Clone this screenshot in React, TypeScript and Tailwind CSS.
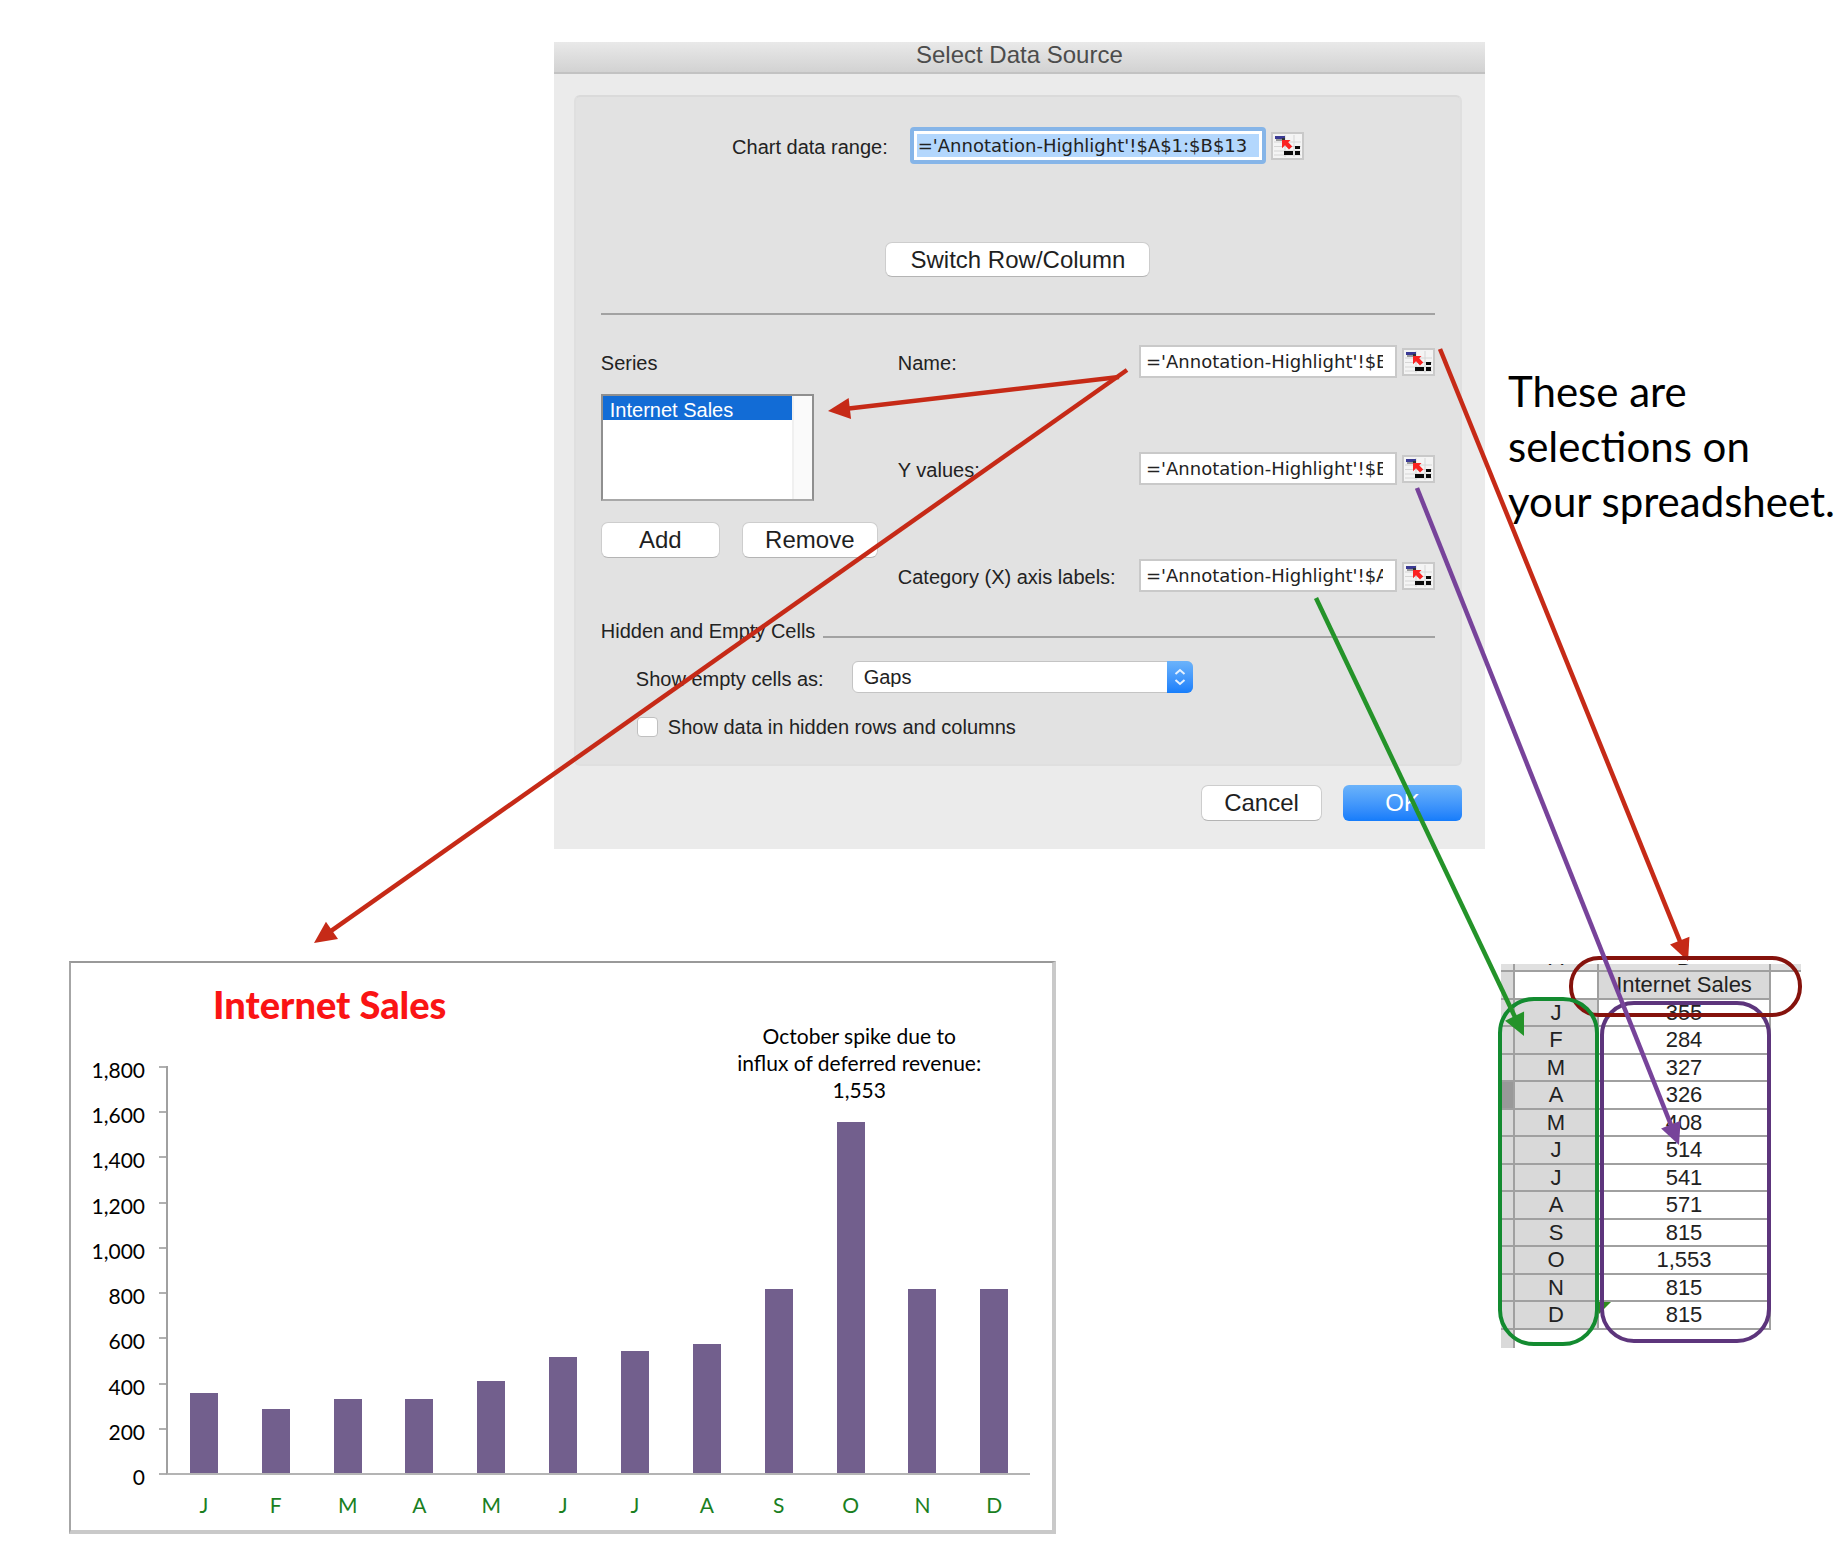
import React from "react";

const sales = [
  { month: "J", value: 355 },
  { month: "F", value: 284 },
  { month: "M", value: 327 },
  { month: "A", value: 326 },
  { month: "M", value: 408 },
  { month: "J", value: 514 },
  { month: "J", value: 541 },
  { month: "A", value: 571 },
  { month: "S", value: 815 },
  { month: "O", value: 1553 },
  { month: "N", value: 815 },
  { month: "D", value: 815 },
];

const AXIS_MAX = 1800;
const axisSteps = [1800, 1600, 1400, 1200, 1000, 800, 600, 400, 200, 0];

function RangePicker({ label }: { label: string }) {
  return (
    <button
      type="button"
      aria-label={label}
      className="h-[28px] w-[33px] shrink-0 border-2 border-[#c9c9c9] bg-[#f4f4f4]"
    >
      <svg viewBox="0 0 29 24" className="block h-[24px] w-[29px]" aria-hidden="true">
        <path d="M1 8h27M1 12.500h27M1 17h27M1 21h27M12 1v22M21 1v22" stroke="#d6d6d6" strokeWidth="1" />
        <rect x="2" y="2" width="10" height="3" fill="#3a3a94" />
        <rect x="3" y="5" width="9" height="2" fill="#9a9a9a" />
        <rect x="9" y="4" width="3" height="3" fill="#333" />
        <rect x="11" y="17" width="9" height="4" fill="#0a0a0a" />
        <rect x="22" y="17" width="5" height="4" fill="#0a0a0a" />
        <rect x="22" y="12" width="5" height="3" fill="#0a0a0a" />
        <path d="M9 6h8.500l-2.300 2.300 4 4.200-3.200 3-4-4.300-3 3z" fill="#fb2222" />
      </svg>
    </button>
  );
}

function RangeField({ id, label, value }: { id: string; label: string; value: string }) {
  return (
    <div className="flex h-[33px] items-center">
      <label htmlFor={id} className="flex-1 whitespace-nowrap pt-[3px]">
        {label}
      </label>
      <input
        id={id}
        type="text"
        defaultValue={value}
        className="h-[33px] w-[258px] border-2 border-[#c9c9c9] bg-white pl-[5px] pr-[12px] font-['DejaVu_Sans',sans-serif] text-[18px] outline-none"
      />
      <span className="ml-[5px] flex">
        <RangePicker label={`Pick range for ${label}`} />
      </span>
    </div>
  );
}

const pushButton =
  "rounded-[7px] border border-[#cdcdcd] border-b-[#b4b4b4] bg-white text-[24px] leading-none text-[#1f1f1f]";

function DataSourceDialog() {
  return (
    <form
      aria-labelledby="dialog-title"
      onSubmit={(e) => e.preventDefault()}
      className="min-w-0 flex-1 bg-[#ebebeb] pb-[28px] font-['Liberation_Sans',Arial,sans-serif] text-[20px] leading-[24px] text-[#222]"
    >
      <h1
        id="dialog-title"
        className="h-[32px] border-b-2 border-[#c2c2c2] bg-linear-to-b from-[#e9e9e9] to-[#d2d2d2] text-center text-[24px] leading-[26px] text-[#4c4c4c]"
      >
        Select Data Source
      </h1>

      <div className="mt-[21px] ml-[20px] mr-[23px] rounded-[6px] border-2 border-[#dfdfdf] border-t-[#dadada] bg-[#e2e2e2] px-[25px] pt-[30px] pb-[25px]">
        <div className="flex items-center justify-center">
          <label htmlFor="chart-range" className="pt-[3px]">
            Chart data range:
          </label>
          <span className="ml-[22px] rounded-[4px] border-4 border-[#86b5e8] bg-white p-[3px]">
            <input
              id="chart-range"
              type="text"
              defaultValue="='Annotation-Highlight'!$A$1:$B$13"
              className="block h-[23px] w-[342px] bg-[#b3d7fd] pl-px font-['DejaVu_Sans',sans-serif] text-[18px] outline-none"
            />
          </span>
          <span className="ml-[5px] flex">
            <RangePicker label="Pick chart data range" />
          </span>
        </div>

        <div className="mt-[78px] flex justify-center">
          <button type="button" className={`${pushButton} h-[35px] w-[265px]`}>
            Switch Row/Column
          </button>
        </div>

        <hr className="mt-[36px] border-t-2 border-[#a2a2a2]" />

        <div className="mt-[30px] flex">
          <div className="w-[297px] shrink-0">
            <h2 id="series-label" className="pt-[6px]">
              Series
            </h2>
            <div className="mt-[19px] flex h-[107px] w-[213px] border-2 border-[#8f8f8f] border-b-[#a8a8a8] bg-white">
              <ul role="listbox" aria-labelledby="series-label" className="flex-1">
                <li
                  role="option"
                  aria-selected="true"
                  className="h-[24px] bg-[#126cd6] pl-[7px] leading-[28px] text-white"
                >
                  Internet Sales
                </li>
              </ul>
              <div className="w-[20px] border-l-2 border-[#f0f0f0] bg-[#fafafa]" />
            </div>
            <div className="mt-[21px] flex gap-[22px]">
              <button type="button" className={`${pushButton} h-[36px] w-[119px]`}>
                Add
              </button>
              <button type="button" className={`${pushButton} h-[36px] w-[136px]`}>
                Remove
              </button>
            </div>
          </div>
          <div className="flex flex-1 flex-col gap-[74px]">
            <RangeField id="series-name" label="Name:" value="='Annotation-Highlight'!$B$1" />
            <RangeField id="series-values" label="Y values:" value="='Annotation-Highlight'!$B$2:$B$13" />
            <RangeField id="series-axis" label="Category (X) axis labels:" value="='Annotation-Highlight'!$A$2:$A$13" />
          </div>
        </div>

        <div className="mt-[27px] flex items-center gap-[8px]">
          <h2>Hidden and Empty Cells</h2>
          <div className="mt-[12px] h-[2px] flex-1 bg-[#a2a2a2]" />
        </div>

        <div className="mt-[18px] flex items-center pl-[35px]">
          <label htmlFor="empty-cells" className="pt-[3px]">
            Show empty cells as:
          </label>
          <div className="relative ml-[28px] w-[341px]">
            <select
              id="empty-cells"
              defaultValue="Gaps"
              className="block h-[32px] w-full appearance-none rounded-[6px] border border-[#c4c4c4] bg-white pl-[11px] leading-none outline-none"
            >
              <option>Gaps</option>
              <option>Zero</option>
            </select>
            <span className="pointer-events-none absolute inset-y-0 right-0 flex w-[26px] items-center justify-center rounded-r-[6px] bg-linear-to-b from-[#6bb3fa] to-[#167efb]">
              <svg viewBox="0 0 12 18" className="h-[18px] w-[12px]" aria-hidden="true">
                <path d="M1.500 6 6 2l4.500 4M1.500 12 6 16l4.500-4" fill="none" stroke="#e4f1ff" strokeWidth="2" />
              </svg>
            </span>
          </div>
        </div>

        <label className="mt-[22px] flex items-center gap-[10px] pl-[36px]">
          <input
            type="checkbox"
            className="h-[20px] w-[21px] appearance-none rounded-[4px] border border-[#c0c0c0] bg-white"
          />
          Show data in hidden rows and columns
        </label>
      </div>

      <div className="mt-[19px] flex justify-end gap-[21px] pr-[23px]">
        <button type="button" className={`${pushButton} h-[36px] w-[121px]`}>
          Cancel
        </button>
        <button
          type="submit"
          className="h-[36px] w-[119px] rounded-[6px] bg-linear-to-b from-[#6bb3fa] to-[#147cfb] text-[24px] leading-none text-white"
        >
          OK
        </button>
      </div>
    </form>
  );
}

function SalesChart() {
  return (
    <figure className="relative w-[57%] self-start border-t-2 border-r-4 border-b-4 border-l-2 border-t-[#999] border-r-[#c9c9c9] border-b-[#c9c9c9] border-l-[#a6a6a6] bg-white pr-[22px] pb-[13px] font-['Lato',sans-serif] text-[21px] leading-[24px] text-black">
      <figcaption className="ml-[142px] pt-[19px] text-[38px] leading-[44px] font-black text-[#fa1414]">
        Internet Sales
      </figcaption>
      <p className="absolute top-[59px] right-[48px] w-[290px] text-center leading-[27px]">
        October spike due to
        <br />
        influx of deferred revenue:
        <br />
        1,553
      </p>
      <div className="mt-[40px] flex h-[409px]">
        <ul className="-mt-[8px] -mb-[14px] flex w-[74px] flex-col justify-between text-right">
          {axisSteps.map((step) => (
            <li key={step}>{step.toLocaleString("en-US")}</li>
          ))}
        </ul>
        <div className="ml-[14px] flex w-[7px] flex-col justify-between">
          {axisSteps.map((step) => (
            <span key={step} className="h-[2px] bg-[#b0b0b0]" />
          ))}
        </div>
        <div className="grid flex-1 grid-cols-12 items-end justify-items-center border-b-2 border-l-2 border-b-[#b4b4b4] border-l-[#a0a0a0]">
          {sales.map((item, i) => (
            <div
              key={i}
              className="w-[28px] bg-[#725f8d]"
              style={{ height: `${(item.value / AXIS_MAX) * 100}%` }}
            />
          ))}
        </div>
      </div>
      <ol className="mt-[18px] ml-[97px] grid grid-cols-12 text-center text-[#1a7f1f]">
        {sales.map((item, i) => (
          <li key={i}>{item.month}</li>
        ))}
      </ol>
    </figure>
  );
}

const gutter = "border-r-2 border-b-2 border-[#a0a0a0] p-0";

function Worksheet() {
  return (
    <table className="mt-[3px] w-[300px] table-fixed border-separate border-spacing-0 self-start text-center font-['Liberation_Sans',Arial,sans-serif] text-[22px] leading-[24px] text-[#222]">
      <colgroup>
        <col className="w-[14px]" />
        <col className="w-[84px]" />
        <col className="w-[172px]" />
        <col className="w-[30px]" />
      </colgroup>
      <thead>
        <tr className="bg-[#e0e0e0] font-normal">
          <td className={`${gutter} h-[8px]`} />
          <th scope="col" className={`${gutter} h-[8px] font-normal`}>
            <div className="flex h-[6px] items-end justify-center overflow-hidden">
              <span>A</span>
            </div>
          </th>
          <th scope="col" className={`${gutter} h-[8px] font-normal`}>
            <div className="flex h-[6px] items-end justify-center overflow-hidden">
              <span>B</span>
            </div>
          </th>
          <td className="h-[8px] border-b-2 border-[#a0a0a0] p-0" />
        </tr>
      </thead>
      <tbody>
        <tr className="h-[28px]">
          <td className={`${gutter} bg-[#d9d9d9]`} />
          <td className={gutter} />
          <th scope="col" className={`${gutter} bg-[#d9d9d9] font-normal whitespace-nowrap`}>
            Internet Sales
          </th>
          <td className="p-0" />
        </tr>
        {sales.map((item, i) => (
          <tr key={i} className={i % 2 === 0 ? "h-[27px]" : "h-[28px]"}>
            <td className={i === 3 ? `${gutter} bg-[#999]` : `${gutter} bg-[#d9d9d9]`} />
            <th scope="row" className={`${gutter} bg-[#d9d9d9] font-normal`}>
              {item.month}
            </th>
            <td className={`${gutter} relative bg-white`}>
              {item.value.toLocaleString("en-US")}
              {i === 11 && (
                <span className="absolute top-0 left-0 border-t-[12px] border-r-[12px] border-t-[#2f8a1f] border-r-transparent" />
              )}
            </td>
            <td className="p-0" />
          </tr>
        ))}
        <tr>
          <td className="h-[18px] border-r-2 border-[#a0a0a0] bg-[#d9d9d9] p-0" />
          <td colSpan={3} />
        </tr>
      </tbody>
    </table>
  );
}

function Arrow({ from, to, color }: { from: [number, number]; to: [number, number]; color: string }) {
  const dx = to[0] - from[0];
  const dy = to[1] - from[1];
  const length = Math.hypot(dx, dy);
  const ux = dx / length;
  const uy = dy / length;
  const bx = to[0] - ux * 22;
  const by = to[1] - uy * 22;
  const head = `${to[0]},${to[1]} ${bx - uy * 10.5},${by + ux * 10.5} ${bx + uy * 10.5},${by - ux * 10.5}`;
  return (
    <g>
      <line x1={from[0]} y1={from[1]} x2={bx + ux} y2={by + uy} stroke={color} strokeWidth="4.5" />
      <polygon points={head} fill={color} />
    </g>
  );
}

function Annotations() {
  return (
    <svg
      viewBox="0 0 1846 1560"
      preserveAspectRatio="none"
      className="pointer-events-none absolute inset-0 h-full w-full"
      aria-hidden="true"
    >
      <Arrow from={[1119, 377]} to={[828, 411]} color="#c62a17" />
      <Arrow from={[1127, 370]} to={[314, 943]} color="#c62a17" />
      <Arrow from={[1440, 349]} to={[1688, 961]} color="#c62a17" />
      <g fill="none" strokeWidth="4">
        <rect x="1602" y="1003" width="167" height="338" rx="32" stroke="#5d357c" />
        <rect x="1571" y="958" width="229" height="57" rx="28" stroke="#85120c" />
        <rect x="1500" y="999" width="97" height="345" rx="34" stroke="#138b30" />
      </g>
      <Arrow from={[1417, 488]} to={[1679, 1145]} color="#77439a" />
      <Arrow from={[1316, 598]} to={[1524, 1036]} color="#249329" />
    </svg>
  );
}

export default function App() {
  return (
    <main className="relative min-h-screen bg-white pt-[42px] pb-[26px]">
      <section className="flex pl-[30%]">
        <DataSourceDialog />
        <div className="w-[361px] shrink-0" />
      </section>
      <section className="mt-[112px] flex justify-between pr-[45px] pl-[69px]">
        <SalesChart />
        <Worksheet />
      </section>
      <Annotations />
      <p className="absolute top-[364px] right-0 w-[338px] font-['Lato',sans-serif] text-[42px] leading-[55px] text-black">
        These are
        <br />
        selections on
        <br />
        your spreadsheet.
      </p>
    </main>
  );
}
